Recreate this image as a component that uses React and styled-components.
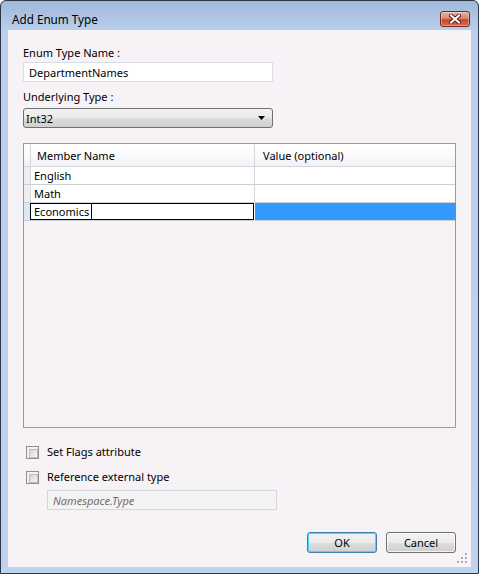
import React, { useState } from "react";
import styled, { createGlobalStyle } from "styled-components";

const GlobalStyle = createGlobalStyle`
  html, body {
    margin: 0;
    padding: 0;
    background: #ffffff;
  }
  * { box-sizing: border-box; }
`;

const font = `"Noto Sans", "DejaVu Sans", sans-serif`;

const Window = styled.div`
  width: 479px;
  height: 574px;
  display: flex;
  flex-direction: column;
  border: 1px solid #2c3644;
  border-radius: 6px 6px 0 0;
  background: linear-gradient(#9fb9d9 0px, #b9cfea 29px, #bed4ee 100%);
  font-family: ${font};
  font-size: 11px;
  color: #000;
  overflow: hidden;
`;

const TitleBar = styled.div`
  height: 29px;
  flex: none;
  display: flex;
  align-items: flex-start;
  justify-content: space-between;
  padding: 0 8px 0 11px;
`;

const Title = styled.div`
  font-size: 11.7px;
  line-height: 14px;
  margin-top: 11px;
`;

const CloseButton = styled.button`
  margin-top: 10px;
  width: 30px;
  height: 16px;
  padding: 0;
  border: 1px solid #6e2a20;
  border-radius: 3px;
  background: linear-gradient(#eab0a4 0%, #dc8672 45%, #c8492f 55%, #d56a4c 100%);
  box-shadow: inset 0 0 0 1px rgba(255, 255, 255, 0.35);
  display: flex;
  align-items: center;
  justify-content: center;
`;

const Content = styled.div`
  flex: 1;
  margin: 0 7px 6px 7px;
  background: #f6f2f6;
  padding: 14px 15px 14px 15px;
  display: flex;
  flex-direction: column;
  position: relative;
`;

const Label = styled.div`
  line-height: 16px;
  margin-top: ${(p) => p.$top || 0}px;
`;

const TextBox = styled.div`
  width: ${(p) => p.$width || 250}px;
  height: 20px;
  margin-top: ${(p) => p.$top || 0}px;
  margin-left: ${(p) => p.$left || 0}px;
  border: 1px solid ${(p) => (p.$disabled ? "#d3d6da" : "#d7dde5")};
  background: ${(p) => (p.$disabled ? "#f4f3f4" : "#ffffff")};
  padding: 0 5px;
  display: flex;
  align-items: center;
  color: ${(p) => (p.$disabled ? "#6d6d6d" : "#000")};
  font-style: ${(p) => (p.$disabled ? "italic" : "normal")};
`;

const Select = styled.div`
  width: 250px;
  height: 20px;
  margin-top: 3px;
  border: 1px solid #707070;
  border-radius: 3px;
  background: linear-gradient(#f2f2f2 0%, #ebebeb 50%, #dddddd 51%, #cfcfcf 100%);
  display: flex;
  align-items: center;
  justify-content: space-between;
  padding: 0 7px 0 2px;
`;

const Grid = styled.div`
  margin-top: 15px;
  height: 285px;
  border: 1px solid #8a9db2;
  background: #f6f2f6;
  display: flex;
  flex-direction: column;
`;

const Row = styled.div`
  display: flex;
  flex: none;
  height: ${(p) => (p.$header ? 23 : 18)}px;
  border-bottom: 1px solid ${(p) => (p.$header ? "#d5d5db" : "#cdcfd6")};
  background: ${(p) =>
    p.$header ? "linear-gradient(#ffffff 0%, #f9f9fb 60%, #f1f2f6 100%)" : "#ffffff"};
`;

const RowHead = styled.div`
  width: 7px;
  flex: none;
  border-right: 1px solid #d5d5db;
  background: ${(p) => (p.$current ? "#d8eaf9" : p.$header ? "transparent" : "#eeeeef")};
`;

const Cell = styled.div`
  width: ${(p) => p.$width}px;
  flex: none;
  display: flex;
  align-items: center;
  padding-left: ${(p) => p.$pad || 3}px;
  border-right: 1px solid #d5d5db;
  background: ${(p) => (p.$selected ? "#3399ff" : "transparent")};
  &:last-child {
    border-right: none;
  }
`;

/* the cell being edited: black frame that sits one pixel left of the cell */
const EditCell = styled.div`
  width: 224px;
  flex: none;
  margin-left: -1px;
  display: flex;
  align-items: stretch;
  padding-left: 3px;
  border: 1px solid #000;
  margin-right: 1px;
`;

const EditText = styled.span`
  display: flex;
  align-items: center;
  padding-right: 2px;
  border-right: 1px solid #000;
`;

const CheckRow = styled.label`
  display: flex;
  align-items: center;
  gap: 8px;
  margin-top: ${(p) => p.$top}px;
  margin-left: 3px;
  line-height: 14px;
`;

const CheckBox = styled.span`
  width: 13px;
  height: 13px;
  flex: none;
  border: 1px solid #8f8f8f;
  background: #f4f4f4;
  padding: 2px;
  &::after {
    content: "";
    display: block;
    width: 100%;
    height: 100%;
    border: 1px solid #b9bcc0;
    background: linear-gradient(135deg, #d3d5d8 0%, #eceded 70%, #f7f7f7 100%);
  }
`;

const Footer = styled.div`
  margin-top: auto;
  display: flex;
  justify-content: flex-end;
  gap: 9px;
`;

const Button = styled.button`
  width: 70px;
  height: 21px;
  font-family: ${font};
  font-size: 11px;
  color: #000;
  padding: 0;
  border: 1px solid ${(p) => (p.$default ? "#3c7fb1" : "#707070")};
  border-radius: 3px;
  background: linear-gradient(#f2f2f2 0%, #ebebeb 50%, #dddddd 51%, #cfcfcf 100%);
  box-shadow: ${(p) =>
    p.$default ? "inset 0 0 0 1px #48d8fb" : "inset 0 0 0 1px rgba(255,255,255,0.7)"};
`;

const Grip = styled.svg`
  position: absolute;
  right: 2px;
  bottom: 2px;
`;

function CloseGlyph() {
  return (
    <svg width="12" height="10" viewBox="0 0 12 10">
      <path d="M2 1.5 L10 8.5 M10 1.5 L2 8.5" stroke="#5a2018" strokeWidth="4" strokeLinecap="square" />
      <path d="M2 1.5 L10 8.5 M10 1.5 L2 8.5" stroke="#ffffff" strokeWidth="2" strokeLinecap="square" />
    </svg>
  );
}

function SizeGrip() {
  const dots = [
    [8, 0], [8, 4], [4, 4], [8, 8], [4, 8], [0, 8],
  ];
  return (
    <Grip width="12" height="12" viewBox="0 0 12 12">
      {dots.map(([x, y], i) => (
        <g key={i}>
          <rect x={x + 1} y={y + 1} width="2" height="2" fill="#ffffff" />
          <rect x={x} y={y} width="2" height="2" fill="#a3acb9" />
        </g>
      ))}
    </Grip>
  );
}

const members = [
  { name: "English", value: "" },
  { name: "Math", value: "" },
];

export default function App() {
  const [flags, setFlags] = useState(false);
  const [external, setExternal] = useState(false);

  return (
    <>
      <GlobalStyle />
      <Window>
        <TitleBar>
          <Title>Add Enum Type</Title>
          <CloseButton aria-label="Close">
            <CloseGlyph />
          </CloseButton>
        </TitleBar>
        <Content>
          <Label $top={1}>Enum Type Name :</Label>
          <TextBox $top={1}>DepartmentNames</TextBox>
          <Label $top={7}>Underlying Type :</Label>
          <Select>
            <span>Int32</span>
            <svg width="7" height="4" viewBox="0 0 7 4">
              <path d="M0 0 H7 L3.5 4 Z" fill="#000" />
            </svg>
          </Select>

          <Grid>
            <Row $header>
              <RowHead $header />
              <Cell $width={224} $pad={6}>Member Name</Cell>
              <Cell $width={201} $pad={8}>Value (optional)</Cell>
            </Row>
            {members.map((m) => (
              <Row key={m.name}>
                <RowHead />
                <Cell $width={224}>{m.name}</Cell>
                <Cell $width={201}>{m.value}</Cell>
              </Row>
            ))}
            <Row>
              <RowHead $current />
              <EditCell>
                <EditText>Economics</EditText>
              </EditCell>
              <Cell $width={201} $selected />
            </Row>
          </Grid>

          <CheckRow $top={17} onClick={() => setFlags(!flags)}>
            <CheckBox />
            Set Flags attribute
          </CheckRow>
          <CheckRow $top={11} onClick={() => setExternal(!external)}>
            <CheckBox />
            Reference external type
          </CheckRow>
          <TextBox $disabled $width={230} $left={24} $top={6}>
            Namespace.Type
          </TextBox>

          <Footer>
            <Button $default>OK</Button>
            <Button>Cancel</Button>
          </Footer>
          <SizeGrip />
        </Content>
      </Window>
    </>
  );
}
